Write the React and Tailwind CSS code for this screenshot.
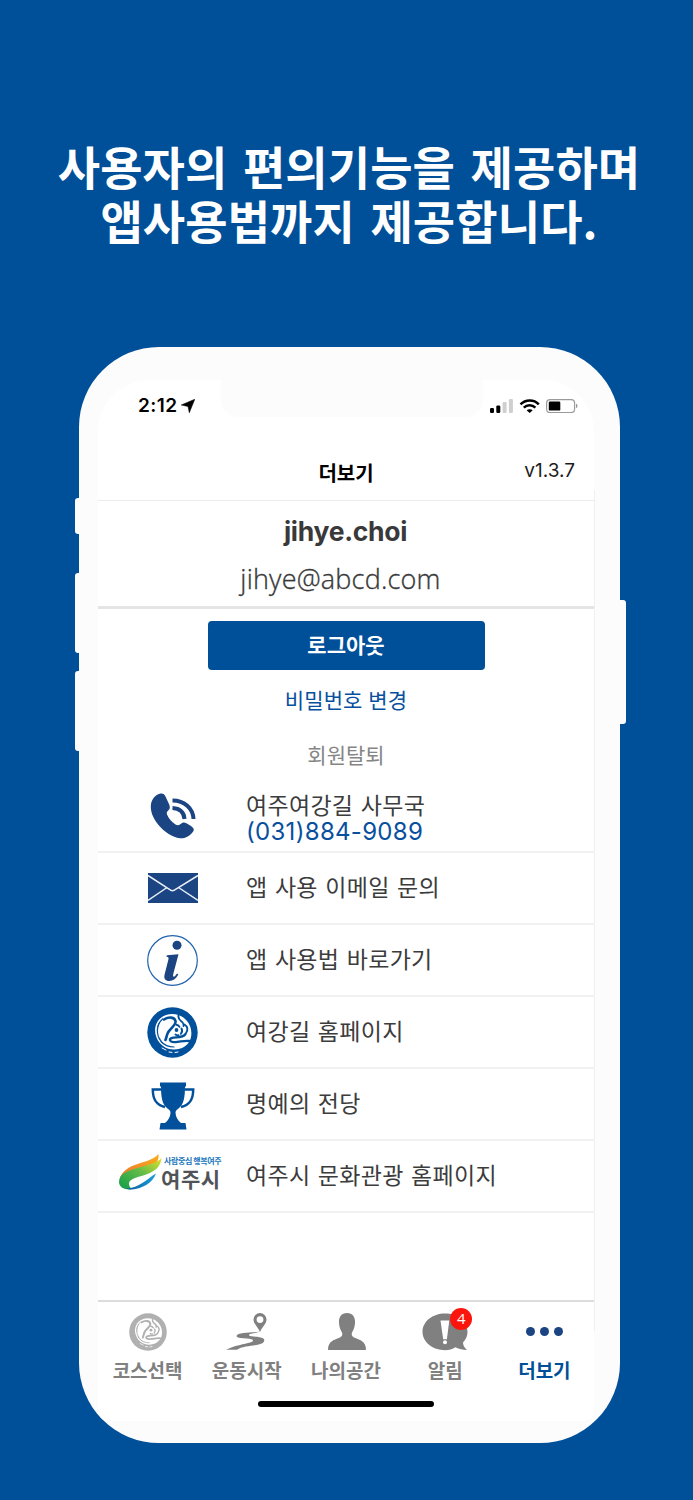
const KR = "font-['Noto_Sans_CJK_KR',sans-serif]";
const LATIN = "font-['Inter','Noto_Sans_CJK_KR',sans-serif]";

function Emblem({ color, className }) {
  return (
    <svg viewBox="0 0 51 51" className={className}>
      <circle cx="25.5" cy="25.5" r="25.2" fill={color} />
      <path d="M19 8C9 11.500 6 22 9.500 30.500 12.500 38 19 42.500 27 42.500c8 0 14-4 16.500-10.500 2.300-7.500 0-15.500-6-20.500C32.500 7 25 6 19 8z" fill="#fff" />
      <g fill="none" stroke={color} strokeLinecap="round" strokeLinejoin="round">
        <path d="M15.500 12C9 18 9 28 14 34.500c3.500 4 8 5.500 13 5.500" strokeWidth="1.200" />
        <path d="M12 16c-1.500 3-2 6-1.500 9M12.500 31c1 2.500 3 5 5 6.500" strokeWidth=".9" />
        <path d="M17 12.500c4.500-3 10.500-2.500 11.500 1.500 1 4-5 7-7.500 11.500-1.500 3-1.500 5-2.500 7.500" strokeWidth="2.600" />
        <path d="M31.500 8.500c-.5 3 .5 4 2.500 5.500 2 1.300 3 3 2.500 5" strokeWidth="1.900" />
        <path d="M37.500 17.500c3 2 3.800 5 1.500 8.500" strokeWidth="1.800" />
        <path d="M29.500 17.800c1.500.3 2.500 1 3 2M34.500 21.500c1 2 .8 3.800-.7 5.300M28.500 27.500c1 .8 2 1 3 .8" strokeWidth="1.900" />
        <path d="M38.500 27c-2 3-5 3.300-9 3.300-4.500 0-7 1.200-6.500 3 .5 1.700 3.500 2 7.500 1.500 4-.4 8-1.500 12-.8" strokeWidth="2.300" />
      </g>
      <circle cx="29.500" cy="23" r="1.900" fill={color} />
      <path d="M15 41l4 2M22 45l3 .4M28 45.500l3-.5" stroke="#fff" strokeWidth="1" strokeLinecap="round" />
    </svg>
  );
}

function PhoneIcon() {
  return (
    <svg viewBox="0 0 46 46" className="h-[46px] w-[46px]" fill="none">
      <path
        d="M10.500.5C6 1.500 2 5.500 1 11c-1 6 1.500 14 7.500 21 6 7 14 12.500 21.500 13.300 5 .3 10-1.800 13.500-7.300 1-2-.5-3.500-2.500-5l-5-3c-2-1-3.800-.5-5.500 1-1.500 1.300-3 1.800-5 .5-3.500-2.200-6.800-6-8.500-10-.8-2 .3-3.300 1.700-4.500 1.300-1.300 1.500-3 .5-5.500l-3.700-8C14.500 1 12.800.1 10.500.5z"
        fill="#1b4482"
      />
      <path d="M22.500 7.500c12 0 20.500 8 21 18.500M22.500 15c7.500.5 11.500 4.500 12 11" stroke="#1b4482" strokeWidth="4" />
    </svg>
  );
}

function MailIcon() {
  return (
    <svg viewBox="0 0 50 30" className="h-[30px] w-[50px]" fill="none">
      <path d="M0 0h50v30H0z" fill="#1b4482" />
      <path d="M0 2.500L21 16q3.500 3.500 7 0L50 2.500M0 27.500L19 14.500M50 27.500L30.500 14.500" stroke="#e8eef6" strokeWidth="1.500" />
    </svg>
  );
}

function InfoIcon() {
  return (
    <svg viewBox="0 0 51 51" className="h-[51px] w-[51px]">
      <circle cx="25.500" cy="25.500" r="24.800" fill="#fff" stroke="#1f62ac" strokeWidth="1.200" />
      <circle cx="30" cy="10.300" r="4.500" fill="#1b4482" />
      <path
        d="M20 20.300l11.500-1-5.300 20c-.6 2.700.8 2.900 2.100 1.400l1.700-2.200 1.300 1c-2.500 4.500-5.500 6.500-9 6.500-4 0-5.800-2.500-4.700-6.500L21.400 24.500c.5-2 .1-2.800-2-2.800z"
        fill="#1b4482"
      />
    </svg>
  );
}

function TrophyIcon() {
  return (
    <svg viewBox="0 0 44 48" className="ml-px mt-[3px] h-[48px] w-[44px]">
      <path
        d="M9 .5h26v4h-1c0 10-1 18-6.500 22-2 1.500-3 2.500-3 4 0 4.500 2.500 8 5.500 10.500h4.500l1 6.500H8.500l1-6.500H14c3-2.500 5.500-6 5.500-10.500 0-1.500-1-2.500-3-4C11 22.500 10 14.500 10 4.500H9z"
        fill="#00509b"
      />
      <path d="M10 7.500H1.800c0 10 3.200 15.500 12.200 17.500M34 7.500h8.200C42.200 17.500 39 23 30 25" fill="none" stroke="#00509b" strokeWidth="2.500" />
    </svg>
  );
}

function CityLogo() {
  return (
    <div className="flex items-center pb-[9px]">
      <svg viewBox="0 0 43 36" className="h-[36px] w-[43px]">
        <defs>
          <linearGradient id="orange" x1="0" y1="1" x2="1" y2="0">
            <stop offset="0" stopColor="#f0722c" />
            <stop offset="1" stopColor="#f9b01e" />
          </linearGradient>
          <linearGradient id="green" x1="0" y1="1" x2="1" y2="0">
            <stop offset="0" stopColor="#0d9b4a" />
            <stop offset=".55" stopColor="#66bd48" />
            <stop offset="1" stopColor="#dfe22b" />
          </linearGradient>
          <linearGradient id="blue" x1="0" y1="0" x2="1" y2="0">
            <stop offset="0" stopColor="#0a5b9e" />
            <stop offset="1" stopColor="#1ba0dc" />
          </linearGradient>
        </defs>
        <path d="M1 24C4 15 13 11.500 23 8.500 30 6.500 36 4 39.500 0c.8 6-2 10.500-8 13C23 17 8 18 1 24z" fill="url(#orange)" />
        <path d="M0 28c0-9 10-11.500 20-14.500C30 10.500 38 9 42.500 4c-.5 8-6 13-14 16C21 23 11 24 10 29c-.3 2 .8 4.500 3 6.300C5 36 0 33 0 28z" fill="url(#green)" />
        <path d="M7 34.500c12.500 0 20-9 30-15-3 9-14 15.500-24 16-2.300 0-4.500-.3-6-1z" fill="url(#blue)" />
      </svg>
      <div className="-ml-px flex w-[62px] flex-col whitespace-nowrap">
        <span className="pl-[3px] text-[8px] font-bold leading-[12px] tracking-[-0.4px] text-[#1675bd]">사람중심 행복여주</span>
        <span className="pt-px text-[21px] font-bold leading-[20px] tracking-[0.6px] text-[#505458]">여주시</span>
      </div>
    </div>
  );
}

const MENU = [
  { icon: <PhoneIcon />, label: "여주여강길 사무국", phone: "(031)884-9089" },
  { icon: <MailIcon />, label: "앱 사용 이메일 문의" },
  { icon: <InfoIcon />, label: "앱 사용법 바로가기" },
  { icon: <Emblem color="#00509b" className="h-[51px] w-[51px]" />, label: "여강길 홈페이지" },
  { icon: <TrophyIcon />, label: "명예의 전당" },
  { icon: <CityLogo />, label: "여주시 문화관광 홈페이지", wide: true },
];

function MenuRow({ icon, label, phone, wide }) {
  return (
    <li className="flex h-[72px] items-center border-b-2 border-[#f1f1f2]">
      <div className={wide ? "flex w-[148px] pl-[21px]" : "flex w-[148px] justify-center pl-px"}>{icon}</div>
      <div className={phone ? "pt-[4px]" : "pb-[4px]"}>
        <p className="whitespace-nowrap text-[23px] leading-[27px] tracking-[0.3px] text-[#3c3c3c] [word-spacing:2px]">{label}</p>
        {phone && <p className={`${LATIN} pt-px text-[24px] leading-[26px] tracking-[0.3px] text-[#07509e]`}>{phone}</p>}
      </div>
    </li>
  );
}

function RouteIcon() {
  return (
    <svg viewBox="0 0 41 37" className="h-[37px] w-[41px]" fill="#808080">
      <path fillRule="evenodd" d="M34 19c-2-5-6.500-8-6.500-12.500a6.500 6.500 0 0 1 13 0C40.500 11 36 14 34 19zM34 3.200a3.400 3.400 0 1 0 0 6.800 3.400 3.400 0 0 0 0-6.800z" />
      <path d="M33.500 18.500c-8 1.500-22.500.5-23 4.500 0 3.500 16.500 1.500 16.500 4.500 0 3-14 3-27 9.300h11C18 31.500 37.500 34 38.300 27.500c.3-5-15.300-3-15.300-5.500 0-1.500 7-1.500 10.500-3.500z" />
    </svg>
  );
}

function PersonIcon() {
  return (
    <svg viewBox="0 0 38 37" className="ml-[3px] h-[37px] w-[38px]" fill="#808080">
      <path d="M19 0c5.500 0 8.500 4 8 10-.3 4.500-1.500 7-3 9.500-.8 2 0 4 2 5 5.500 2.500 12 3 12 12.500H0c0-9.500 6.500-10 12-12.500 2-1 2.800-3 2-5-1.500-2.500-2.700-5-3-9.500C10.500 4 13.500 0 19 0z" />
    </svg>
  );
}

function AlertIcon() {
  return (
    <div className="relative">
      <svg viewBox="0 0 46 38" className="h-[38px] w-[46px]">
        <path d="M23 .5c12.500 0 22.500 8 22.500 18.300 0 4.200-1.500 7.500-4.500 10.700 0 3 1.500 5 4 7.500-4 0-8-1-11.500-2.800C30.500 36 27 37.200 23 37.200 10.500 37.200.5 29 .5 18.800S10.500.5 23 .5z" fill="#808080" />
        <path d="M18.500 7.500h8.800l-2.400 18.700h-3.700z" fill="#fff" />
        <circle cx="23" cy="29.300" r="2" fill="#fff" />
      </svg>
      <span className="absolute -top-[5px] left-[28px] flex h-[22px] w-[22px] items-center justify-center rounded-full bg-[#fb150d] font-['Open_Sans',sans-serif] text-[15px] leading-none text-white">
        4
      </span>
    </div>
  );
}

function DotsIcon() {
  return (
    <div className="flex gap-[5px]">
      <i className="h-[9px] w-[9px] rounded-full bg-[#1b4482]" />
      <i className="h-[9px] w-[9px] rounded-full bg-[#1b4482]" />
      <i className="h-[9px] w-[9px] rounded-full bg-[#1b4482]" />
    </div>
  );
}

const TABS = [
  { icon: <Emblem color="#b0b0b0" className="h-[38px] w-[38px]" />, label: "코스선택" },
  { icon: <RouteIcon />, label: "운동시작" },
  { icon: <PersonIcon />, label: "나의공간" },
  { icon: <AlertIcon />, label: "알림" },
  { icon: <DotsIcon />, label: "더보기", active: true },
];

function StatusBar() {
  return (
    <div className="flex h-[52px] items-center justify-between pl-[40px] pr-[16px]">
      <div className="flex items-center gap-[4px]">
        <span className={`${LATIN} text-[19px] font-semibold tracking-[0.4px] text-black`}>2:12</span>
        <svg viewBox="0 0 14 14" className="h-[14px] w-[14px]">
          <path d="M13.800.2L8.300 13.800 7 7.500.2 6z" fill="#000" stroke="#000" strokeWidth=".5" strokeLinejoin="round" />
        </svg>
      </div>
      <svg viewBox="0 0 88 14" className="h-[14px] w-[88px]">
        <rect x="0" y="9" width="4" height="5" rx="1.200" />
        <rect x="6.300" y="6.500" width="4" height="7.500" rx="1.200" />
        <rect x="12.600" y="3" width="4" height="11" rx="1.200" fill="#cfcfcf" />
        <rect x="18.900" y="0" width="4" height="14" rx="1.200" fill="#cfcfcf" />
        <g fill="none" stroke="#000" strokeWidth="2.500">
          <path d="M30.500 5.300c5-5.200 13.500-5.200 18.300 0" />
          <path d="M33.800 8.700c3.200-3.200 8.300-3.200 11.600 0" />
        </g>
        <path d="M36.600 11.300c1.700-1.500 4.400-1.500 6.100 0l-3 2.700z" />
        <rect x="56.600" y=".6" width="28" height="13" rx="3.500" fill="none" stroke="#9a9a9a" strokeWidth="1.200" />
        <rect x="58.800" y="2.600" width="11.500" height="9" rx="1.200" />
        <path d="M86 4.800c2 .6 2 3.800 0 4.400z" fill="#9a9a9a" />
      </svg>
    </div>
  );
}

export default function App() {
  return (
    <main className={`${KR} h-[1500px] w-[693px] overflow-hidden bg-[#004f99]`}>
      <h1 className="h-[347px] pl-[5px] pt-[138px] text-center text-[46px] font-bold leading-[54px] tracking-[0.1px] text-white [word-spacing:5px]">
        사용자의 편의기능을 제공하며
        <br />
        앱사용법까지 제공합니다.
      </h1>

      <section className="relative ml-[79px] h-[1096px] w-[541px] rounded-[80px] bg-[#fcfcfc] pl-[19px] pt-[33px]">
        {/* hardware buttons */}
        <i className="absolute -left-[4px] top-[151px] h-[36px] w-[8px] rounded-[3px] bg-[#fcfcfc]" />
        <i className="absolute -left-[4px] top-[226px] h-[80px] w-[8px] rounded-[3px] bg-[#fcfcfc]" />
        <i className="absolute -left-[4px] top-[324px] h-[80px] w-[8px] rounded-[3px] bg-[#fcfcfc]" />
        <i className="absolute -right-[6px] top-[253px] h-[124px] w-[10px] rounded-[3px] bg-[#fcfcfc]" />

        <div className="relative flex h-[1041px] w-[496px] flex-col rounded-b-[10px] rounded-t-[52px] bg-white">
          <i className="absolute left-[123px] top-0 h-[37px] w-[262px] rounded-b-[18px] bg-[#fcfcfc]" />
          <i className="absolute -right-px top-[110px] h-[841px] w-px bg-[#f0f0ec]" />

          <header className="h-[121px] border-b border-[#ececec]">
            <StatusBar />
            <div className="grid grid-cols-3 items-center pt-[22px]">
              <h2 className="col-start-2 text-center text-[20px] font-bold leading-[38px] text-black">더보기</h2>
              <span className={`${LATIN} pb-[4px] pr-[19px] text-right text-[19px] leading-[32px] text-[#1c1c1c]`}>v1.3.7</span>
            </div>
          </header>

          <div className="h-[108px] border-b-[3px] border-[#e4e4e5] pt-[11px] text-center text-[#393939]">
            <p className={`${LATIN} pr-px text-[26.5px] font-bold leading-[38px] tracking-[-0.3px]`}>jihye.choi</p>
            <p className="pr-[11px] pt-[9px] font-['Open_Sans',sans-serif] text-[27px] font-light leading-[40px] tracking-[0.2px] [-webkit-text-stroke:0.35px_#393939]">
              jihye@abcd.com
            </p>
          </div>

          <div className="flex h-[171px] flex-col items-center pt-[12px]">
            <button className="h-[49px] w-[277px] rounded-[4px] bg-[#004f99] pb-[2px] text-[21px] font-bold text-white">로그아웃</button>
            <a className="pt-[14px] text-[21px] leading-[30px] tracking-[0.1px] text-[#07509e] [word-spacing:1px]">비밀번호 변경</a>
            <a className="pt-[25px] text-[21px] leading-[30px] text-[#858585]">회원탈퇴</a>
          </div>

          <ul className="flex-1 pt-[1px]">
            {MENU.map((m) => (
              <MenuRow key={m.label} {...m} />
            ))}
          </ul>

          <nav className="grid h-[121px] grid-cols-5 grid-rows-[99px] border-t-2 border-[#dcdcdc]">
            {TABS.map((t) => (
              <div key={t.label} className="flex flex-col items-center pt-[10px]">
                <div className="flex h-[39px] items-center">{t.icon}</div>
                <span
                  className={
                    t.active
                      ? "pt-[4px] text-[19px] font-bold leading-[30px] text-[#004f99]"
                      : "pt-[4px] text-[19px] font-bold leading-[30px] text-[#808080]"
                  }
                >
                  {t.label}
                </span>
              </div>
            ))}
            <div className="col-span-5 flex justify-center">
              <div className="h-[6px] w-[176px] rounded-full bg-black" />
            </div>
          </nav>
        </div>
      </section>
    </main>
  );
}
